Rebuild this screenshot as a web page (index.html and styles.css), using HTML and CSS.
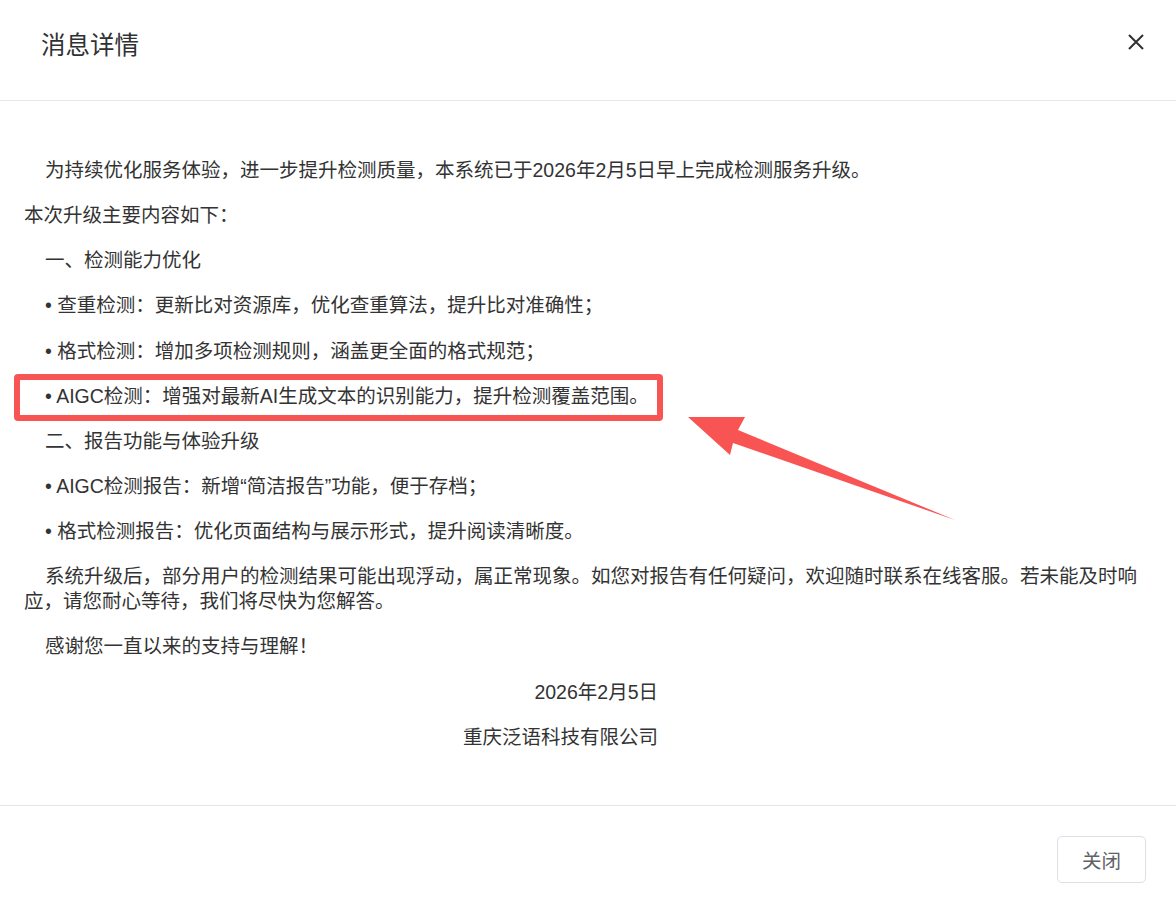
FILE: index.html
```html
<!DOCTYPE html>
<html lang="zh-CN">
<head>
<meta charset="utf-8">
<title>消息详情</title>
<link rel="stylesheet" href="styles.css">
</head>
<body>
<div class="dialog">
  <header class="dlg-header">
    <h2 class="dlg-title">消息详情</h2>
    <button class="dlg-close" aria-label="关闭">
      <svg width="16" height="16" viewBox="0 0 16 16"><path d="M1 1 L15 15 M15 1 L1 15" stroke="#303133" stroke-width="2" fill="none"/></svg>
    </button>
  </header>
  <main class="dlg-body">
    <p class="ind">为持续优化服务体验，进一步提升检测质量，本系统已于2026年2月5日早上完成检测服务升级。</p>
    <p>本次升级主要内容如下：</p>
    <p class="ind">一、检测能力优化</p>
    <p class="ind">• 查重检测：更新比对资源库，优化查重算法，提升比对准确性；</p>
    <p class="ind">• 格式检测：增加多项检测规则，涵盖更全面的格式规范；</p>
    <p class="ind">• AIGC检测：增强对最新AI生成文本的识别能力，提升检测覆盖范围。</p>
    <p class="ind">二、报告功能与体验升级</p>
    <p class="ind">• AIGC检测报告：新增“简洁报告”功能，便于存档；</p>
    <p class="ind">• 格式检测报告：优化页面结构与展示形式，提升阅读清晰度。</p>
    <p class="ind">系统升级后，部分用户的检测结果可能出现浮动，属正常现象。如您对报告有任何疑问，欢迎随时联系在线客服。若未能及时响应，请您耐心等待，我们将尽快为您解答。</p>
    <p class="ind">感谢您一直以来的支持与理解！</p>
    <p class="sign">2026年2月5日</p>
    <p class="sign">重庆泛语科技有限公司</p>
  </main>
  <footer class="dlg-footer">
    <button class="btn">关闭</button>
  </footer>
  <div class="mark-box"></div>
  <svg class="mark-arrow" width="1176" height="906" viewBox="0 0 1176 906">
    <polygon points="688,417 745,417 738,430 955,520 733,443 730,455" fill="#f95454"/>
  </svg>
</div>
</body>
</html>
```

FILE: styles.css
```css
* { box-sizing: border-box; }
html, body { margin: 0; padding: 0; background: #fff; }
body {
  font-family: "Liberation Sans", "Noto Sans CJK SC", sans-serif;
  color: #303133;
}
.dialog {
  position: relative;
  width: 1176px;
  height: 906px;
  display: flex;
  flex-direction: column;
  background: #fff;
}
.dlg-header {
  height: 101px;
  border-bottom: 1px solid #e4e7ed;
  display: flex;
  align-items: center;
  justify-content: space-between;
  padding: 0 32px 8px 41px;
}
.dlg-title {
  margin: 0;
  font-size: 24.5px;
  font-weight: 400;
  line-height: 32px;
  color: #303133;
}
.dlg-close {
  border: 0;
  background: transparent;
  padding: 0;
  width: 16px;
  height: 16px;
  margin-top: -8px;
  display: flex;
  cursor: pointer;
}
.dlg-body {
  flex: 1;
  padding: 57px 24px 0 24px;
  display: flex;
  flex-direction: column;
  gap: 20.15px;
  font-size: 19.5px;
  line-height: 25px;
  color: #333;
}
.dlg-body p { margin: 0; }
.dlg-body .ind { text-indent: 21px; }
.dlg-body .sign { text-align: right; padding-right: 494px; }
.dlg-footer {
  border-top: 1px solid #e4e7ed;
  height: 101px;
  display: flex;
  justify-content: flex-end;
  align-items: flex-start;
  padding: 30px 30px 0 0;
}
.btn {
  width: 89px;
  height: 47px;
  border: 1px solid #dcdfe6;
  border-radius: 5px;
  background: #fff;
  color: #606266;
  font-family: "Noto Sans CJK SC", "Liberation Sans", sans-serif;
  font-size: 19.5px;
  padding: 0;
}
.mark-box {
  position: absolute;
  left: 14px;
  top: 374px;
  width: 649px;
  height: 47px;
  border: 6px solid #f95454;
  border-radius: 4px;
}
.mark-arrow {
  position: absolute;
  left: 0;
  top: 0;
  pointer-events: none;
}
```
